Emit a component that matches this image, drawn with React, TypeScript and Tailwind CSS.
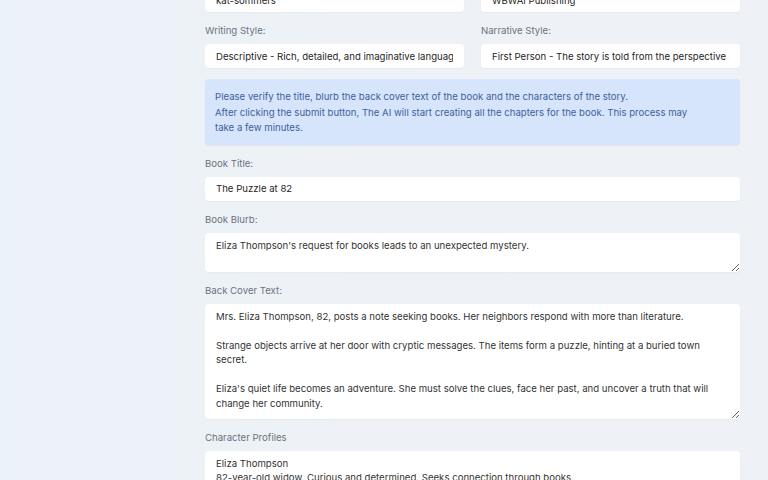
import React from 'react'

const font = { fontFamily: 'Inter, "Noto Sans", sans-serif' }

const Label = ({ children }: { children: React.ReactNode }) => (
  <div className="mb-[5px] text-[9.6px] leading-[16px] text-[#6b7280]">{children}</div>
)

const Field = ({ label, value }: { label: string; value: string }) => (
  <div>
    <Label>{label}</Label>
    <input
      readOnly
      value={value}
      className="block h-[24px] w-full rounded-[4px] bg-white px-[11px] text-[9.6px] text-[#262626] shadow-[0_1px_2px_rgba(15,23,42,0.04)] outline-none"
    />
  </div>
)

const Area = ({ label, value, height }: { label: string; value: string; height: string }) => (
  <div>
    <Label>{label}</Label>
    <textarea
      readOnly
      defaultValue={value}
      className={`block w-full resize-y rounded-[4px] bg-white px-[11px] pt-[6px] pb-[8px] text-[9.6px] leading-[14.5px] text-[#333] shadow-[0_1px_2px_rgba(15,23,42,0.04)] outline-none ${height}`}
    />
  </div>
)

const backCover = `Mrs. Eliza Thompson, 82, posts a note seeking books. Her neighbors respond with more than literature.

Strange objects arrive at her door with cryptic messages. The items form a puzzle, hinting at a buried town secret.

Eliza's quiet life becomes an adventure. She must solve the clues, face her past, and uncover a truth that will change her community.`

const characters = `Eliza Thompson
82-year-old widow. Curious and determined. Seeks connection through books.
`

export default function App() {
  return (
    <div
      style={font}
      className="h-[480px] overflow-hidden bg-gradient-to-r from-[#ebf1f8] via-[#eef2f6] to-[#eef2f6] pl-[205px] pr-[28px]"
    >
      <div className="-mt-[33px] flex flex-col gap-[11px]">
        <div className="grid grid-cols-2 gap-[17px]">
          <Field label="Author Name:" value="kat-sommers" />
          <Field label="Publisher:" value="WBWAI Publishing" />
        </div>

        <div className="grid grid-cols-2 gap-[17px]">
          <Field label="Writing Style:" value="Descriptive - Rich, detailed, and imaginative language" />
          <Field label="Narrative Style:" value="First Person - The story is told from the perspective of a character" />
        </div>

        <div className="rounded-[4px] bg-[#d6e5fb] pt-[10px] pr-[40px] pb-[9px] pl-[10px] text-[9.6px] leading-[15.5px] text-[#40609c] shadow-[0_1px_2px_rgba(15,23,42,0.06)]">
          <p>Please verify the title, blurb the back cover text of the book and the characters of the story.</p>
          <p>
            After clicking the submit button, The AI will start creating all the chapters for the book. This process may
            take a few minutes.
          </p>
        </div>

        <Field label="Book Title:" value="The Puzzle at 82" />
        <Area
          label="Book Blurb:"
          value="Eliza Thompson's request for books leads to an unexpected mystery."
          height="h-[39px]"
        />
        <Area label="Back Cover Text:" value={backCover} height="h-[115px]" />
        <Area label="Character Profiles" value={characters} height="h-[120px]" />
      </div>
    </div>
  )
}
